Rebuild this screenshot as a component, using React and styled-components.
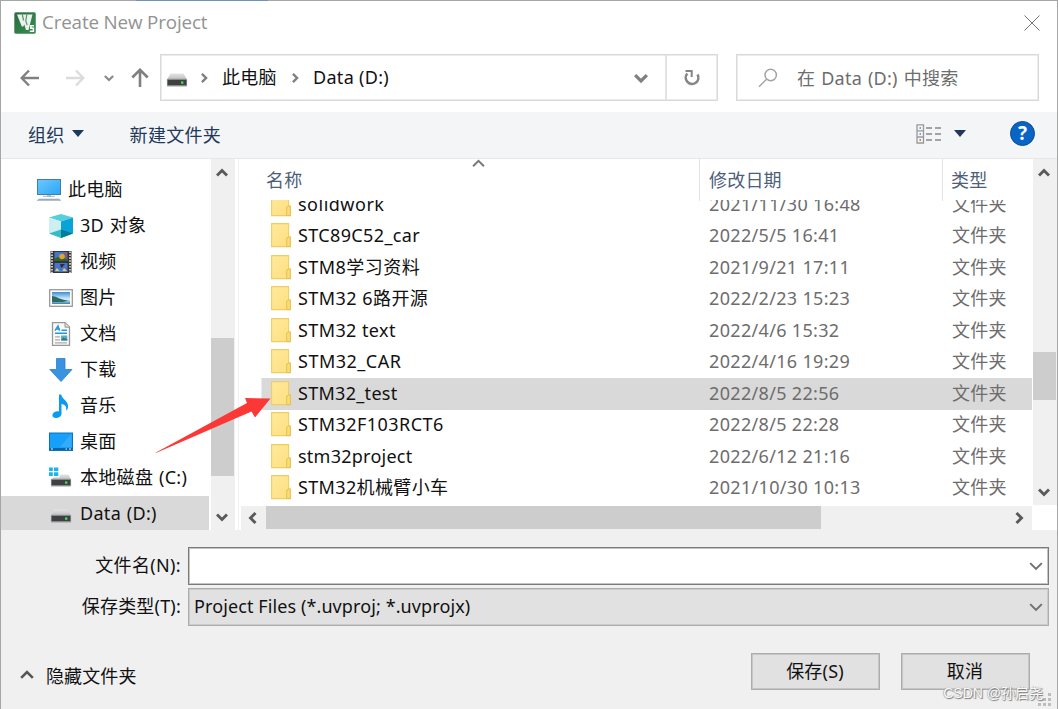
import styled, { createGlobalStyle } from 'styled-components';

let GlobalStyle = createGlobalStyle`
    *{
        box-sizing: border-box;
    }
    body{
        margin: 0;
        background: #f0f0f0;
        font-family: "Noto Sans", "Noto Sans CJK SC", sans-serif;
        font-size: 18px;
        color: #111;
        overflow: hidden;
    }
`

let folders = [
    { name: 'solidwork', date: '2021/11/30 16:48', ls: 0.5 },
    { name: 'STC89C52_car', date: '2022/5/5 16:41', ls: 0.37 },
    { name: 'STM8学习资料', date: '2021/9/21 17:11', ls: 0.45 },
    { name: 'STM32 6路开源', date: '2022/2/23 15:23', ls: 0.45 },
    { name: 'STM32 text', date: '2022/4/6 15:32', ls: 0.4 },
    { name: 'STM32_CAR', date: '2022/4/16 19:29', ls: 0.5 },
    { name: 'STM32_test', date: '2022/8/5 22:56', ls: 0.3, selected: true },
    { name: 'STM32F103RCT6', date: '2022/8/5 22:28', ls: 0.45 },
    { name: 'stm32project', date: '2022/6/12 21:16', ls: 0.25 },
    { name: 'STM32机械臂小车', date: '2021/10/30 10:13', ls: 0.36 },
]

let Chevron = ({ dir = 'down', size = 12, color = '#5a5a5a', weight = 2.9 }) => {
    let turn = { down: 0, left: 90, up: 180, right: 270 }[dir]
    return (
        <svg width={size} height={size} viewBox='0 0 12 12' fill='none' stroke={color} strokeWidth={weight}>
            <path d='M1 3.5L6 8.5L11 3.5' transform={`rotate(${turn} 6 6)`} />
        </svg>
    )
}

let Logo = () => (
    <svg width='22' height='22' viewBox='0 0 22 22'>
        <defs>
            <linearGradient id='logo' x1='0' y1='0' x2='1' y2='1'>
                <stop offset='0' stopColor='#2b6b40' />
                <stop offset='1' stopColor='#33904f' />
            </linearGradient>
        </defs>
        <rect x='0.5' y='0.5' width='21' height='21' rx='1.5' fill='url(#logo)' stroke='#6f9c7d' />
        <path d='M3 2.5H18.5L14.5 18H12L10.3 12.5L9.3 14.5H7.8Z' fill='#e9f2ec' />
        <path d='M8.3 2.5L9.6 8.5M12.8 2.5L11.8 9L13.2 13' stroke='#5b9470' strokeWidth='1.2' fill='none' />
        <path d='M20 13.7H16.8V16.3H19.4V19.2H15.8' stroke='#fff' strokeWidth='1.5' fill='none' />
    </svg>
)

let Drive = ({ windows }) => (
    <svg width='24' height='24' viewBox='0 0 24 24'>
        <defs>
            <linearGradient id='lid' x1='0' y1='0' x2='0' y2='1'>
                <stop offset='0' stopColor='#e3e4e5' />
                <stop offset='1' stopColor='#bcbfc1' />
            </linearGradient>
        </defs>
        {windows && <path d='M0 1.5H3.8V5H0ZM5 1.5H9.3V5H5ZM0 6.3H3.8V10H0ZM5 6.3H9.3V10H5Z' fill='#19b5ee' />}
        {windows
            ? <path d='M10.5 8.5H19.5L22 13.5H2.5L4.5 11.5H10.5Z' fill='url(#lid)' />
            : <path d='M5.5 7.5H18.5L22 13.5H2Z' fill='url(#lid)' />}
        <rect x='1.9' y='12.8' width='20.2' height='7.7' rx='0.8' fill='#9b9d9e' />
        <rect x='2.6' y='13.8' width='18.8' height='5.4' fill='#3d4142' />
        <rect x='16' y='15.4' width='2.4' height='2.4' fill='#3be04c' />
    </svg>
)

let Monitor = () => (
    <svg width='26' height='24' viewBox='0 0 26 24'>
        <defs>
            <linearGradient id='screen' x1='0' y1='0' x2='1' y2='1'>
                <stop offset='0' stopColor='#69c8ff' />
                <stop offset='1' stopColor='#2ea6f6' />
            </linearGradient>
        </defs>
        <rect x='1' y='1' width='24' height='16' fill='#427fa6' />
        <rect x='2' y='2' width='22' height='14' fill='url(#screen)' />
        <path d='M11 17H15V19H11Z' fill='#b8c5ce' />
        <path d='M7 18.3H19' stroke='#a4b4c1' />
        <path d='M1 22.5L3 21H23L25 22.5Z' fill='#8fa3b3' stroke='#a9b9c5' strokeWidth='0.7' />
    </svg>
)

let Cube = () => (
    <svg width='24' height='24' viewBox='0 0 24 24'>
        <path d='M0 3.5L12 0L24 3.5L12 7.5Z' fill='#54cfdc' />
        <path d='M0 3.5L12 7.5V24L0 19.5Z' fill='#cdeff0' />
        <path d='M24 3.5L12 7.5V24L24 19.5Z' fill='#0ba2d8' />
        <path d='M0 19.5L12 15.5V24Z' fill='#35bccb' />
        <path d='M12 15.5L24 19.5L12 24Z' fill='#057b94' />
    </svg>
)

let Film = () => (
    <svg width='24' height='24' viewBox='0 0 24 24'>
        <rect x='1.5' y='1' width='21' height='22' fill='#343434' />
        <path d='M3 1.5V23M21 1.5V23' stroke='#d5d5d5' strokeWidth='1.8' strokeDasharray='1.6 1.3' />
        <rect x='5.5' y='2' width='13' height='9' fill='#4576c8' />
        <rect x='5.5' y='13' width='13' height='9' fill='#4676cc' />
        <path d='M5.5 8.5L9 7L18.5 9V11H5.5Z' fill='#2e6429' />
        <circle cx='13' cy='6.5' r='2.8' fill='#dfa72b' />
        <path d='M15 3.5L17 5V8' stroke='#ca402c' strokeWidth='1.5' fill='none' />
        <path d='M6 21L8 18L10.5 21ZM13.5 21L15 18L18 21Z' fill='#efcc4b' />
        <path d='M11 14H16L14 16.5L12 18Z' fill='#3b2540' />
    </svg>
)

let Picture = () => (
    <svg width='24' height='24' viewBox='0 0 24 24'>
        <defs>
            <linearGradient id='sky' x1='0' y1='0' x2='0' y2='1'>
                <stop offset='0' stopColor='#3b8edc' />
                <stop offset='0.6' stopColor='#d8f0f7' />
                <stop offset='1' stopColor='#397db5' />
            </linearGradient>
        </defs>
        <rect x='0.7' y='3.7' width='22.6' height='16.6' fill='#fff' stroke='#999' strokeWidth='1.3' />
        <rect x='3' y='6' width='18' height='12' fill='url(#sky)' />
        <path d='M3 10C7 10 9 13 19 14.5L14 16H3Z' fill='#2e6a60' />
    </svg>
)

let Doc = () => (
    <svg width='24' height='24' viewBox='0 0 24 24'>
        <path d='M3.5 0.7H16L20.5 5V23.3H3.5Z' fill='#fafafa' stroke='#979797' strokeWidth='1.3' />
        <path d='M16 1V5.2H20.5' fill='#ddd' stroke='#979797' />
        <path d='M6 8.7L9 4L10.5 8.7M7 7H11' stroke='#2497d8' strokeWidth='1.4' fill='none' />
        <path d='M12.5 8.2H18M6 11.3H18' stroke='#2497d8' strokeWidth='1.4' />
        <path d='M6 14.8H11M6 17.8H11M6 20.8H18' stroke='#aaa' strokeWidth='1.3' />
        <rect x='12' y='13.5' width='6.3' height='5' fill='#5ba9d5' />
        <path d='M12 18.5L14 15.5L18.3 17V18.5Z' fill='#397d6c' />
    </svg>
)

let Download = () => (
    <svg width='24' height='24' viewBox='0 0 24 24'>
        <path d='M7.5 0.5H16V11.5H23L12 23.5L0.8 11.5H7.5Z' fill='#3893e0' stroke='#2c7dca' strokeWidth='0.8' />
    </svg>
)

let Music = () => (
    <svg width='24' height='24' viewBox='0 0 24 24'>
        <path d='M10 0.5H12.2C12.7 5 20 7 19 13.5C18.7 15 18 16 17 16.5C18 12.5 16 10.5 12.5 10V19.5C12.5 22.5 9.5 24 7 24C4.5 24 3 22.5 3.5 20.5C4 18 7.5 16.5 10 17.5Z' fill='#0a9bf2' />
    </svg>
)

let Desktop = () => (
    <svg width='24' height='24' viewBox='0 0 24 24'>
        <rect x='0.5' y='3' width='23' height='17.5' fill='#17a0fa' stroke='#0774bd' />
        <path d='M11 17L22.5 4V17Z' fill='#34acfb' />
        <path d='M1 19H23' stroke='#0864a5' strokeWidth='2' />
        <path d='M2 19H4M16.5 19H18M20 19H22' stroke='#eef' strokeWidth='1.2' />
    </svg>
)

let FolderIcon = () => (
    <svg width='20' height='25' viewBox='0 0 20 25'>
        <defs>
            <linearGradient id='folder' x1='0' y1='0' x2='1' y2='1'>
                <stop offset='0' stopColor='#ffe99c' />
                <stop offset='1' stopColor='#fddf7f' />
            </linearGradient>
        </defs>
        <path d='M0.6 0.6H17.6V14H19.3V23.6H0.6Z' fill='url(#folder)' stroke='#f0cd62' strokeWidth='1.1' />
        <path d='M17.6 14L15.7 15V23.6H19.3V14Z' fill='#fbdc79' stroke='#e4bd4a' strokeWidth='0.9' />
    </svg>
)

let places = [
    { name: '3D 对象', icon: <Cube /> },
    { name: '视频', icon: <Film /> },
    { name: '图片', icon: <Picture /> },
    { name: '文档', icon: <Doc /> },
    { name: '下载', icon: <Download /> },
    { name: '音乐', icon: <Music /> },
    { name: '桌面', icon: <Desktop /> },
    { name: '本地磁盘 (C:)', icon: <Drive windows /> },
    { name: 'Data (D:)', icon: <Drive />, selected: true },
]

let App = () => {
    return (
        <>
            <GlobalStyle />
            <Window>
                <TopEdge />
                <TitleBar>
                    <Logo />
                    <h1>Create New Project</h1>
                    <svg width='16' height='16' viewBox='0 0 16 16' stroke='#777' strokeWidth='1'>
                        <path d='M0.5 0.5L15.5 15.5M15.5 0.5L0.5 15.5' />
                    </svg>
                </TitleBar>

                <NavBar>
                    <NavButtons>
                        <svg width='20' height='18' viewBox='0 0 20 18' fill='none' stroke='#808080' strokeWidth='2.4'>
                            <path d='M19 9H2M9 1.5L1.7 9L9 16.5' />
                        </svg>
                        <svg width='20' height='18' viewBox='0 0 20 18' fill='none' stroke='#dcdcdc' strokeWidth='2.4'>
                            <path d='M1 9H18M11 1.5L18.3 9L11 16.5' />
                        </svg>
                        <Chevron size={10} color='#8a8a8a' weight={2.6} />
                        <svg width='18' height='20' viewBox='0 0 18 20' fill='none' stroke='#808080' strokeWidth='2.6'>
                            <path d='M9 19V2M1.3 9.5L9 1.8L16.7 9.5' />
                        </svg>
                    </NavButtons>
                    <AddressBox>
                        <Drive />
                        <Chevron dir='right' size={10} color='#808080' />
                        <Crumb $w={55}>此电脑</Crumb>
                        <Chevron dir='right' size={10} color='#808080' />
                        <Crumb $w={80}>Data (D:)</Crumb>
                        <DropArrow><Chevron size={14} color='#808080' weight={2.8} /></DropArrow>
                        <Refresh>
                            <svg width='18' height='20' viewBox='0 0 18 20' fill='none' stroke='#858585' strokeWidth='2.6'>
                                <path d='M4.3 5.5A6.3 6.3 0 1 0 14.5 6.5' />
                                <path d='M2.5 3H8.7V9' strokeWidth='2' />
                            </svg>
                        </Refresh>
                    </AddressBox>
                    <SearchBox>
                        <svg width='20' height='20' viewBox='0 0 20 20' fill='none' stroke='#a3a3a3' strokeWidth='1.5'>
                            <circle cx='12.7' cy='7' r='5.7' />
                            <path d='M8.5 11.2L1 18.7' />
                        </svg>
                        <span>在 Data (D:) 中搜索</span>
                    </SearchBox>
                </NavBar>

                <ToolBar>
                    <ToolText>组织</ToolText>
                    <Caret />
                    <ToolText $left={46}>新建文件夹</ToolText>
                    <ToolRight>
                        <svg width='26' height='20' viewBox='0 0 26 20' fill='none'>
                            <path d='M1 0.8H7.5V19H1ZM1 6.8H7.5M1 13H7.5' stroke='#999' strokeWidth='1.3' />
                            <path d='M10 4H16M19 4H25M10 10H16M19 10H25M10 16H16M19 16H25' stroke='#888' strokeWidth='1.4' />
                            <path d='M3.5 4H5' stroke='#4a9a62' strokeWidth='1.5' />
                            <path d='M3.5 10H5' stroke='#3d8be8' strokeWidth='1.5' />
                            <path d='M3.5 16H5' stroke='#d94343' strokeWidth='1.5' />
                        </svg>
                        <Caret />
                        <Help>?</Help>
                    </ToolRight>
                </ToolBar>

                <Body>
                    <Sidebar>
                        <Place $root>
                            <Monitor />
                            <span>此电脑</span>
                        </Place>
                        {places.map((place) => (
                            <Place key={place.name} $selected={place.selected}>
                                {place.icon}
                                <span>{place.name}</span>
                            </Place>
                        ))}
                    </Sidebar>
                    <ScrollBar $h={371}>
                        <ScrollEnd><Chevron dir='up' size={12} /></ScrollEnd>
                        <Thumb $top={151} $h={138} />
                        <ScrollEnd $last><Chevron size={12} /></ScrollEnd>
                    </ScrollBar>
                    <Splitter />
                    <Main>
                        <Header>
                            <HeadCell $pad={25}>
                                名称
                                <SortMark><Chevron dir='up' size={13} color='#777' weight={1.8} /></SortMark>
                            </HeadCell>
                            <HeadCell $pad={9}>修改日期</HeadCell>
                            <HeadCell $pad={8}>类型</HeadCell>
                        </Header>
                        <List>
                            {folders.map((folder) => (
                                <Row key={folder.name} $selected={folder.selected}>
                                    <Name $ls={folder.ls}>
                                        <FolderIcon />
                                        <span>{folder.name}</span>
                                    </Name>
                                    <Muted $ls={0.33}>{folder.date}</Muted>
                                    <Muted $ls={0.2}>文件夹</Muted>
                                </Row>
                            ))}
                        </List>
                        <HScroll>
                            <Chevron dir='left' size={12} />
                            <div />
                            <Chevron dir='right' size={12} />
                        </HScroll>
                    </Main>
                    <ScrollBar $h={346}>
                        <ScrollEnd><Chevron dir='up' size={12} /></ScrollEnd>
                        <Thumb $top={165} $h={48} />
                        <ScrollEnd $last><Chevron size={12} /></ScrollEnd>
                    </ScrollBar>
                </Body>

                <Form>
                    <Field $ls={0.35}>
                        <label>文件名(N):</label>
                        <Combo $editable>
                            <span></span>
                            <Chevron size={14} color='#707070' weight={1.7} />
                        </Combo>
                    </Field>
                    <Field $ls={0.2}>
                        <label>保存类型(T):</label>
                        <Combo>
                            <span>Project Files (*.uvproj; *.uvprojx)</span>
                            <Chevron size={14} color='#707070' weight={1.7} />
                        </Combo>
                    </Field>
                </Form>

                <Footer>
                    <HideFolders>
                        <Chevron dir='up' size={14} color='#555' weight={2.2} />
                        <span>隐藏文件夹</span>
                    </HideFolders>
                    <Button>保存(S)</Button>
                    <Button>取消</Button>
                </Footer>

                <Arrow width='120' height='60' viewBox='0 0 120 60'>
                    <path d='M0 56L92 6L90 1L115.5 1.5L100 20.5L96.5 14.5L1.5 55.7Z' fill='#fb3836' />
                </Arrow>
                <Grip width='14' height='14' viewBox='0 0 14 14'>
                    <path d='M10 1H13V4H10ZM5 6H8V9H5ZM10 6H13V9H10ZM0 11H3V14H0ZM5 11H8V14H5ZM10 11H13V14H10Z' fill='#bdbdbd' />
                </Grip>
                <Watermark>CSDN @孙启尧</Watermark>
            </Window>
        </>
    )
}

let Window = styled.div`
    position: relative;
    width: 1058px;
    height: 709px;
    display: flex;
    flex-direction: column;
    background: #f0f0f0;
    border: 1px solid #a6a6a6;
    border-top: none;
    border-bottom: none;
    overflow: hidden;

    svg{
        display: block;
        flex-shrink: 0;
    }
`

let TopEdge = styled.div`
    height: 1px;
    background: linear-gradient(to right, #a6a6a6 135px, #6a94ba 135px, #6a94ba 267px, #a6a6a6 267px);
`

let TitleBar = styled.div`
    height: 44px;
    display: flex;
    align-items: center;
    padding: 0 17px 0 13px;
    background: #fff;

    h1{
        flex: 1;
        margin: 0 0 0 6px;
        padding-bottom: 2px;
        font-family: "Open Sans", "Noto Sans", sans-serif;
        font-size: 18.8px;
        font-weight: 400;
        letter-spacing: -0.15px;
        color: #929292;
    }
`

let NavBar = styled.div`
    height: 67px;
    display: flex;
    align-items: flex-start;
    padding: 9px 18px 0 19px;
    background: #fff;
`

let NavButtons = styled.div`
    width: 140px;
    height: 47px;
    display: flex;
    align-items: center;

    svg:nth-child(2){
        margin-left: 25px;
    }
    svg:nth-child(3){
        margin-left: 19px;
    }
    svg:nth-child(4){
        margin-left: 17px;
    }
`

let AddressBox = styled.div`
    width: 558px;
    height: 47px;
    display: flex;
    align-items: center;
    padding-left: 4px;
    border: 1px solid #d9d9d9;
    box-shadow: inset 0 0 0 1px #ececec;

    > svg:nth-of-type(2){
        margin-left: 10px;
    }
    > svg:nth-of-type(3){
        margin-left: 13px;
    }
`

let Crumb = styled.span`
    width: ${({ $w }) => $w}px;
    height: 28px;
    margin-left: 13px;
    white-space: nowrap;
    letter-spacing: 0.3px;
    line-height: 26px;
`

let DropArrow = styled.div`
    margin-left: auto;
    margin-right: 17px;
`

let Refresh = styled.div`
    width: 52px;
    height: 100%;
    display: flex;
    align-items: center;
    justify-content: center;
    border-left: 2px solid #e2e2e2;
`

let SearchBox = styled.div`
    width: 303px;
    height: 47px;
    margin-left: auto;
    display: flex;
    align-items: center;
    gap: 19px;
    padding-left: 21px;
    border: 1px solid #d9d9d9;
    box-shadow: inset 0 0 0 1px #ececec;
    color: #6d6d6d;
    letter-spacing: 0.25px;
    word-spacing: 1px;
    line-height: 28px;
    white-space: nowrap;
`

let ToolBar = styled.div`
    height: 47px;
    display: flex;
    align-items: center;
    padding: 0 22px 3px 27px;
    background: #f4f5f7;
    border-bottom: 1px solid #e6e7ea;
`

let ToolText = styled.span`
    height: 28px;
    margin-left: ${({ $left }) => $left || 0}px;
    color: #1e395b;
    letter-spacing: 0.3px;
    line-height: 30px;
`

let Caret = styled.i`
    margin-left: 7px;
    border: 6px solid transparent;
    border-top: 7px solid #1e395b;
    border-bottom: none;
`

let ToolRight = styled.div`
    margin-left: auto;
    display: flex;
    align-items: center;

    ${Caret}{
        margin-left: 12px;
    }
`

let Help = styled.span`
    width: 25px;
    height: 25px;
    margin-left: 44px;
    border: 1px solid #0b4d8d;
    border-radius: 50%;
    background: #0864c5;
    color: #fff;
    font-size: 19px;
    font-weight: 700;
    line-height: 23px;
    text-align: center;
`

let Body = styled.div`
    height: 371px;
    display: flex;
    background: #fff;
`

let Sidebar = styled.div`
    width: 208px;
    margin-right: 2px;
    padding-top: 13px;
    overflow: hidden;
`

let Place = styled.div`
    height: 36px;
    display: flex;
    align-items: center;
    gap: ${({ $root }) => $root ? 6 : 7}px;
    padding-left: ${({ $root }) => $root ? 35 : 48}px;
    background: ${({ $selected }) => $selected ? '#d9d9d9' : 'none'};
    letter-spacing: 0.3px;
    word-spacing: 0.8px;
    white-space: nowrap;

    span{
        line-height: 34px;
        height: 36px;
    }
`

let ScrollBar = styled.div`
    width: 24px;
    height: ${({ $h }) => $h}px;
    display: flex;
    flex-direction: column;
    align-items: flex-start;
    background: #f0f0f0;
`

let ScrollEnd = styled.div`
    height: 28px;
    display: flex;
    align-items: center;
    padding-left: 5px;
    margin-top: ${({ $last }) => $last ? 'auto' : 0};
    padding-top: ${({ $last }) => $last ? 2 : 0}px;
`

let Thumb = styled.div`
    width: 23px;
    height: ${({ $h }) => $h}px;
    margin-top: ${({ $top }) => $top}px;
    background: #cdcdcd;
`

let Splitter = styled.div`
    width: 6px;
    border-right: 2px solid #fff;
    border-left: 3px solid #fff;
    background: #f0f0f0;
`

let Main = styled.div`
    width: 791px;
    margin-right: 1px;
    display: flex;
    flex-direction: column;
`

let columns = '458px 243px 90px'

let Header = styled.div`
    height: 41px;
    display: grid;
    grid-template-columns: ${columns};
`

let HeadCell = styled.div`
    position: relative;
    padding-left: ${({ $pad }) => $pad}px;
    border-left: ${({ $pad }) => $pad === 25 ? 0 : 1}px solid #e3e3e3;
    color: #4c607a;
    letter-spacing: 0.2px;
    line-height: 42px;
`

let SortMark = styled.div`
    position: absolute;
    left: 231px;
    top: -2px;
`

let List = styled.div`
    height: 306px;
    overflow: hidden;
    padding-left: 21px;

    > :first-child{
        margin-top: -11.5px;
    }
`

let Row = styled.div`
    height: 31.5px;
    display: grid;
    grid-template-columns: 447px 243px 1fr;
    background: ${({ $selected }) => $selected ? '#d9d9d9' : 'none'};
    box-shadow: ${({ $selected }) => $selected ? '0 0.5px 0 0.5px #d9d9d9' : 'none'};
    line-height: 31px;
    white-space: nowrap;
`

let Name = styled.div`
    display: flex;
    align-items: center;
    gap: 7px;
    padding-left: 9px;
    letter-spacing: ${({ $ls }) => $ls || 0}px;
`

let Muted = styled.span`
    color: #6d6d6d;
    letter-spacing: ${({ $ls }) => $ls || 0}px;
`

let HScroll = styled.div`
    height: 24px;
    display: flex;
    align-items: center;
    padding: 0 7px 0 6px;
    background: #f0f0f0;

    div{
        width: 555px;
        height: 23px;
        margin: 0 auto 1px 7px;
        background: #cdcdcd;
    }
`

let Form = styled.div`
    display: flex;
    flex-direction: column;
    gap: 3px;
    padding: 17px 8px 0 0;
`

let Field = styled.div`
    height: 38px;
    display: flex;

    label{
        width: 180px;
        margin-right: 7px;
        line-height: 37px;
        text-align: right;
        letter-spacing: ${({ $ls }) => $ls}px;
    }
`

let Combo = styled.div`
    flex: 1;
    display: flex;
    align-items: center;
    justify-content: space-between;
    padding: 0 5px;
    border: 1px solid ${({ $editable }) => $editable ? '#7a7a7a' : '#adadad'};
    box-shadow: inset 0 0 0 1px ${({ $editable }) => $editable ? '#c4c4c4' : '#cbcbcb'};
    background: ${({ $editable }) => $editable ? '#fff' : '#e1e1e1'};
    letter-spacing: 0.1px;
    line-height: 34px;

    span{
        height: 36px;
    }
`

let Footer = styled.div`
    height: 80px;
    display: flex;
    gap: 21px;
    padding: 27px 27px 0 19px;
`

let HideFolders = styled.div`
    flex: 1;
    height: 44px;
    display: flex;
    align-items: center;
    gap: 12px;
    letter-spacing: 0.1px;
`

let Button = styled.button`
    width: 129px;
    height: 37px;
    padding: 0 1px 2px 0;
    border: 1px solid #adadad;
    box-shadow: inset 0 0 0 1px #c6c6c6;
    background: #e1e1e1;
    color: #111;
    font: inherit;
    letter-spacing: 0.2px;
    line-height: 30px;
`

let Arrow = styled.svg`
    position: absolute;
    left: 154px;
    top: 397px;
`

let Grip = styled.svg`
    position: absolute;
    right: 5px;
    bottom: 3px;
`

let Watermark = styled.div`
    position: absolute;
    right: 14px;
    bottom: 5px;
    font-family: "Liberation Sans", "Noto Sans CJK SC", sans-serif;
    font-size: 14px;
    line-height: 22px;
    color: #fafafa;
    text-shadow: 1px 1px 1px #777, -0.5px -0.5px 1px #999;
    white-space: nowrap;
`

export default App;
